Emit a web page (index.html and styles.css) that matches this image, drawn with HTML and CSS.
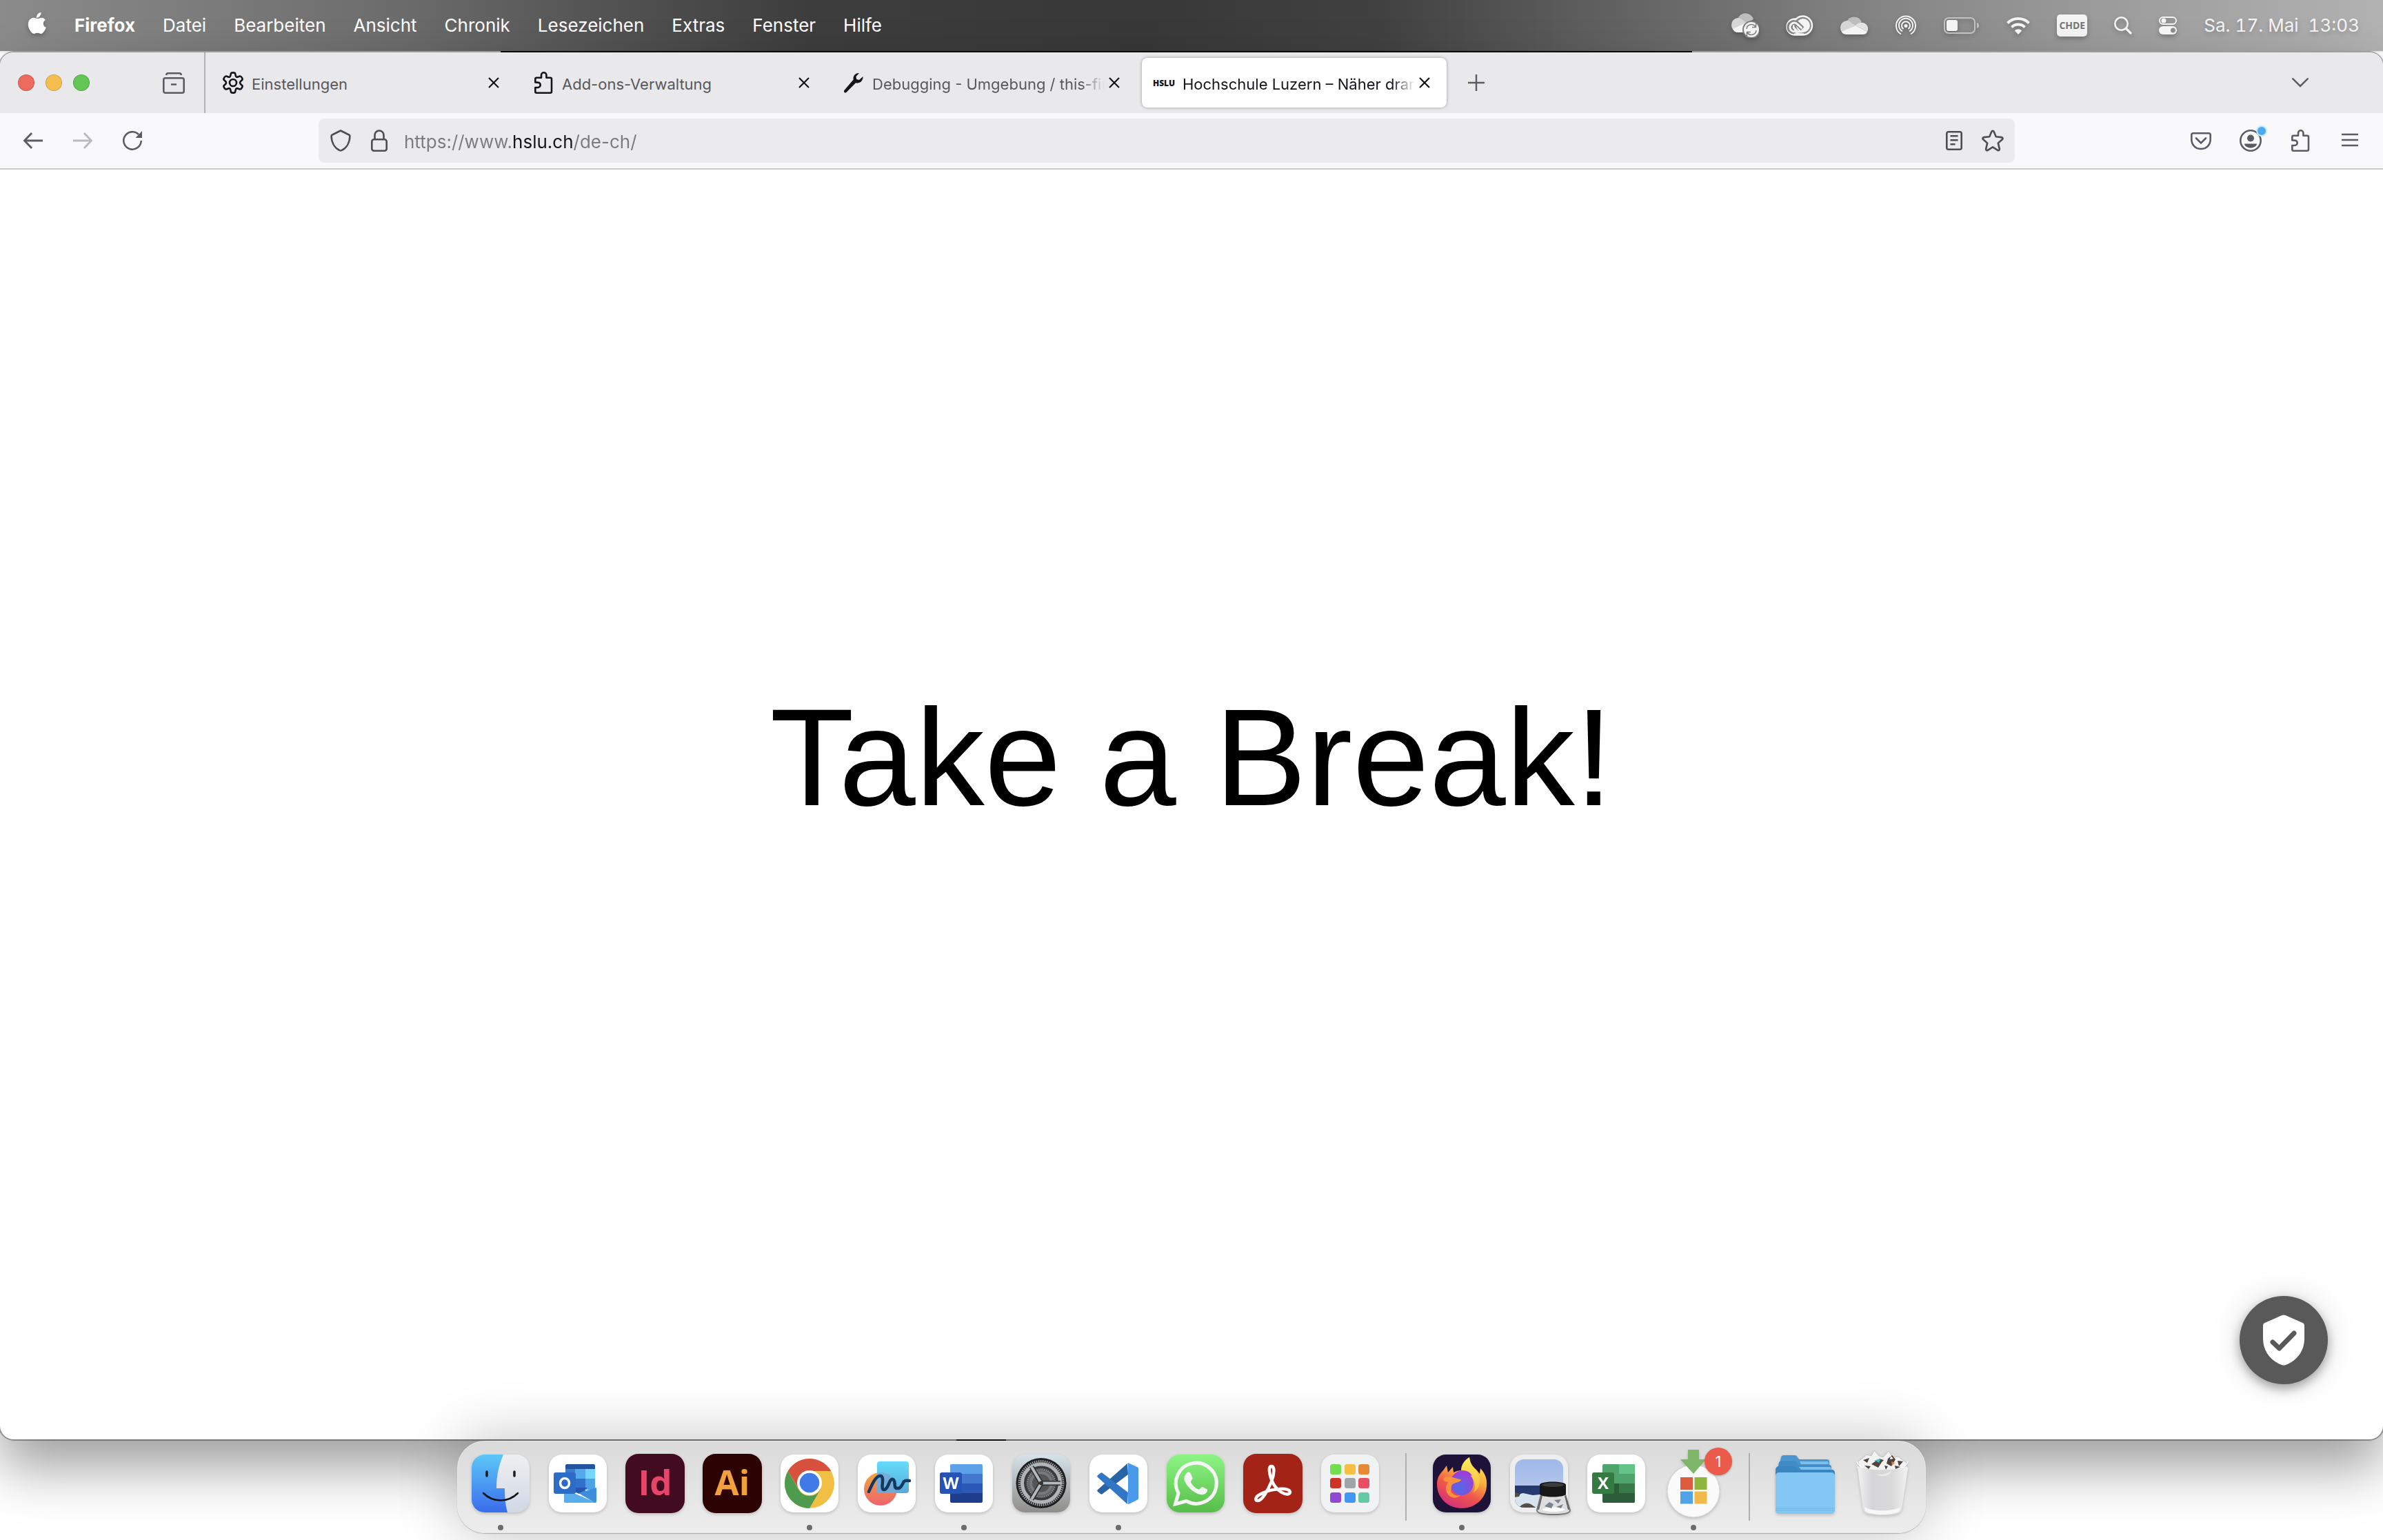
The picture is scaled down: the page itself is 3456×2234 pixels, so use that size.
FILE: index.html
```html
<!DOCTYPE html>
<html lang="de">
<head>
<meta charset="utf-8">
<meta name="viewport" content="width=device-width, initial-scale=1">
<title>Hochschule Luzern – Näher dran</title>
<link rel="stylesheet" href="styles.css">
</head>
<body>
<header class="menubar">
  <nav class="menus" aria-label="Menüleiste">
    <button class="apple" aria-label="Apple-Menü">
      <svg width="28" height="32" viewBox="0 0 28 32" fill="currentColor"><path d="M19.5 0c.3 2-.6 4-1.800 5.400-1.200 1.400-3 2.400-4.800 2.300-.3-2 .7-4 1.800-5.200C15.900 1.100 17.900.1 19.500 0zM25.900 11c-2 1.300-3.100 3-3.100 5.200 0 2.600 1.500 4.600 4.100 5.600-.6 1.800-1.500 3.600-2.600 5.200-1.600 2.300-2.900 4-5 4-1.900 0-2.700-1.200-5.100-1.200S10.900 31 9.100 31c-2 0-3.500-1.900-5.100-4.200-3.200-4.700-4.200-10.600-2-14.700 1.500-2.700 4.100-4.300 6.700-4.300 2.500 0 4 1.300 5.800 1.300S17.900 7.700 20.300 7.700c2.200 0 4.300 1.200 5.600 3.300z"/></svg>
    </button>
    <button class="menu app">Firefox</button>
    <button class="menu">Datei</button>
    <button class="menu">Bearbeiten</button>
    <button class="menu">Ansicht</button>
    <button class="menu">Chronik</button>
    <button class="menu">Lesezeichen</button>
    <button class="menu">Extras</button>
    <button class="menu">Fenster</button>
    <button class="menu">Hilfe</button>
  </nav>
  <div class="status">
    <button aria-label="OneDrive wird synchronisiert">
      <svg width="40" height="36" viewBox="0 0 40 36"><path d="M9 8.500A12 12 0 0 1 32 9l-11 6z" fill="#bdbdbd"/><path d="M9 7a10 10 0 0 0-9 10c0 3 1 5 2.500 7L22 14 14 8.500C12 7 10 7 9 7z" fill="#d6d6d6"/><path d="M2 23l19-9 4 14H10c-4 0-7-2-8-5z" fill="#f4f4f4"/><circle cx="29" cy="24" r="13" fill="#7d7d7d"/><circle cx="29" cy="24" r="11" fill="#f4f4f4"/><path d="M22 23a7 7 0 0 1 13-3M36 25a7 7 0 0 1-13 3M35.500 15v5.500H30M22.500 33v-5.500H28" fill="none" stroke="#7d7d7d" stroke-width="1.500"/></svg>
    </button>
    <button aria-label="Creative Cloud">
      <svg width="40" height="30" viewBox="0 0 40 30"><rect x="1.500" y="5.500" width="30" height="23" rx="11.500" fill="none" stroke="#f4f4f4" stroke-width="2.500"/><circle cx="24.500" cy="15" r="13.500" fill="#858585" stroke="#f4f4f4" stroke-width="2.500"/><path d="M12 27.500h14" stroke="#f4f4f4" stroke-width="2.500"/><circle cx="25" cy="15" r="10" fill="#f4f4f4"/><path d="M12 23.800c-4 0-7-2.600-7-6.400s3-6.700 7-6.700c3 0 4.500 1.500 6 3l6 6" fill="none" stroke="#858585" stroke-width="7"/><path d="M23 24h-9c-5 0-8-3-8-6.600s3-6.400 6.500-6.400c2 0 3 .8 4.500 2.300l5.500 5M11 18l6 5.500" fill="none" stroke="#f4f4f4" stroke-width="3" stroke-linecap="round"/></svg>
    </button>
    <button aria-label="OneDrive">
      <svg width="40" height="28" viewBox="0 0 40 28"><path d="M9 8.500A12 12 0 0 1 31 9l-9 6z" fill="#bdbdbd"/><path d="M9 7a10 10 0 0 0-9 10c0 3 1 5 2.500 7L22 14 14 8.500C12 7 10 7 9 7z" fill="#d6d6d6"/><path d="M22 14c3-4 8-5 11-4 4 1 7 4 7 8 0 2 0 3-1 5z" fill="#e2e2e2"/><path d="M2 23l20-9 17 9c-1 3-4 4-6 4H10c-4 0-7-1-8-4z" fill="#f4f4f4"/></svg>
    </button>
    <button aria-label="AirDrop">
      <svg width="32" height="30" viewBox="0 0 32 30" fill="none" stroke="#f4f4f4" stroke-width="2"><path d="M9 27.500a14 14 0 1 1 14 0M11 23.500a10 10 0 1 1 10 0M12.500 20a6 6 0 1 1 7 0"/><circle cx="16" cy="15.500" r="2.500" fill="#f4f4f4" stroke="none"/></svg>
    </button>
    <button aria-label="Batterie">
      <svg width="52" height="26" viewBox="0 0 52 26"><rect x="1" y="2" width="44" height="22" rx="6" fill="none" stroke="#c2c2c2" stroke-width="2"/><rect x="4" y="5" width="16" height="16" rx="3" fill="#f4f4f4"/><path d="M48 9c4 1 4 7 0 8z" fill="#c2c2c2"/></svg>
    </button>
    <button aria-label="WLAN">
      <svg width="34" height="26" viewBox="0 0 34 26" fill="none" stroke="#f4f4f4" stroke-width="4"><path d="M1.500 9.500a22 22 0 0 1 31 0M7.500 15.500a13.500 13.500 0 0 1 19 0"/><path d="M17 26l-5.300-5.500a7.500 7.500 0 0 1 10.600 0z" fill="#f4f4f4" stroke="none"/></svg>
    </button>
    <button class="layout">CHDE</button>
    <button aria-label="Suche">
      <svg width="26" height="26" viewBox="0 0 26 26" fill="none" stroke="#f4f4f4" stroke-linecap="round"><circle cx="10.500" cy="10.500" r="9.200" stroke-width="2.600"/><path d="M17.500 17.500l6.500 6.500" stroke-width="3.400"/></svg>
    </button>
    <button aria-label="Kontrollzentrum">
      <svg width="26" height="28" viewBox="0 0 26 28"><rect x="1" y="2" width="24" height="10" rx="5" fill="none" stroke="#f4f4f4" stroke-width="2"/><circle cx="7" cy="7" r="3.500" fill="#f4f4f4"/><rect y="15" width="26" height="12" rx="6" fill="#f4f4f4"/><circle cx="20.500" cy="21" r="3.500" fill="#8c8c8c"/></svg>
    </button>
    <button class="clock">Sa. 17. Mai&nbsp; 13:03</button>
  </div>
</header>

<section class="window" aria-label="Firefox">
  <div class="tabbar">
    <div class="lights">
      <button class="light red" aria-label="Schließen"></button>
      <button class="light yellow" aria-label="Minimieren"></button>
      <button class="light green" aria-label="Vollbild"></button>
    </div>
    <button class="recent" aria-label="Zuletzt verwendet">
      <svg width="32" height="32" viewBox="0 0 32 32" fill="none" stroke="currentColor" stroke-width="2.600"><rect x="1.300" y="9.300" width="29.400" height="21.400" rx="2.500"/><path d="M5.300 5c0-2 1-2.700 2.500-2.700h16.400c1.500 0 2.500.7 2.500 2.700M12 18.500h8"/></svg>
    </button>
    <div class="tabs">
      <div class="tab">
        <svg width="32" height="32" viewBox="0 0 32 32" fill="none" stroke="currentColor" stroke-width="2.600" stroke-linejoin="round"><path d="M13 2.500c.5-1.500 5.500-1.500 6 0l1 4c.2.800 1.500 1.500 2.300 1.300l3.500-1.200c1.800-.6 4.700 3.800 3.500 5.200L26.500 14.500c-.7.900-.7 2.100 0 3l2.800 2.700c1.200 1.400-1.700 5.800-3.500 5.200l-3.500-1.200c-.8-.2-2.100.5-2.300 1.300l-1 4c-.5 1.500-5.500 1.500-6 0l-1-4c-.2-.8-1.500-1.500-2.300-1.300l-3.500 1.200c-1.800.6-4.700-3.800-3.500-5.200l2.800-2.700c.7-.9.700-2.100 0-3L2.700 11.800C1.500 10.400 4.400 6 6.200 6.600l3.500 1.200c.8.200 2.100-.5 2.300-1.300z"/><circle cx="16" cy="16" r="5"/></svg>
        <button class="title">Einstellungen</button>
        <button class="close" aria-label="Tab schließen"><svg width="16" height="16" viewBox="0 0 16 16" stroke="currentColor" stroke-width="2.200"><path d="M1 1l14 14M15 1L1 15"/></svg></button>
      </div>
      <div class="tab">
        <svg width="32" height="32" viewBox="0 0 32 32" fill="none" stroke="currentColor" stroke-width="2.600" stroke-linejoin="round"><path d="M4.300 15.500V10.500c0-1 .7-1.700 1.700-1.700h7V5a3.700 3.700 0 0 1 7.400 0v3.800H26c1.200 0 2 .8 2 1.800v18.100c0 1.200-.8 2-2 2H6.300c-1.200 0-2-.8-2-2V23H8a3.700 3.700 0 0 0 0-7.400z"/></svg>
        <button class="title">Add-ons-Verwaltung</button>
        <button class="close" aria-label="Tab schließen"><svg width="16" height="16" viewBox="0 0 16 16" stroke="currentColor" stroke-width="2.200"><path d="M1 1l14 14M15 1L1 15"/></svg></button>
      </div>
      <div class="tab">
        <svg width="32" height="32" viewBox="0 0 32 32" fill="currentColor"><path d="M24 2c-5-.5-9.500 4-8.300 9.500L2.600 26.700c-1 1.200-.8 2.300 0 3.200 1 .9 2.300.8 3.300-.3L19 16.300c6 1.500 11-3.500 10.500-9.300L24 12l-3.800-1-.7-4z"/></svg>
        <button class="title long">Debugging - Umgebung / this-firefox</button>
        <button class="close" aria-label="Tab schließen"><svg width="16" height="16" viewBox="0 0 16 16" stroke="currentColor" stroke-width="2.200"><path d="M1 1l14 14M15 1L1 15"/></svg></button>
      </div>
      <div class="tab active">
        <span class="favicon">HSLU</span>
        <button class="title long">Hochschule Luzern – Näher dran</button>
        <button class="close" aria-label="Tab schließen"><svg width="16" height="16" viewBox="0 0 16 16" stroke="currentColor" stroke-width="2.200"><path d="M1 1l14 14M15 1L1 15"/></svg></button>
      </div>
    </div>
    <button class="newtab" aria-label="Neuer Tab"><svg width="24" height="24" viewBox="0 0 24 24" stroke="currentColor" stroke-width="2.400"><path d="M12 0v24M0 12h24"/></svg></button>
    <button class="alltabs" aria-label="Alle Tabs"><svg width="24" height="14" viewBox="0 0 24 14" fill="none" stroke="currentColor" stroke-width="2.500" stroke-linecap="round"><path d="M1.300 1.300L12 12 22.700 1.300"/></svg></button>
  </div>

  <div class="toolbar">
    <div class="history">
      <button aria-label="Zurück"><svg width="32" height="32" viewBox="0 0 32 32" fill="none" stroke="currentColor" stroke-width="2.800"><path d="M30 16H4M14 5L3.500 16 14 27"/></svg></button>
      <button class="off" aria-label="Vor"><svg width="32" height="32" viewBox="0 0 32 32" fill="none" stroke="currentColor" stroke-width="2.800"><path d="M2 16h26M18 5l10.500 11L18 27"/></svg></button>
      <button aria-label="Neu laden"><svg width="32" height="32" viewBox="0 0 32 32" fill="none" stroke="currentColor" stroke-width="2.600"><path d="M28.700 16A12.700 12.700 0 1 1 25 7"/><path d="M30 2v10H20.500z" fill="currentColor" stroke="none"/></svg></button>
    </div>
    <div class="urlbar">
      <button aria-label="Schutz vor Aktivitätenverfolgung"><svg width="32" height="32" viewBox="0 0 32 32" fill="none" stroke="currentColor" stroke-width="2.600" stroke-linejoin="round"><path d="M16 1.500l12 6c1 .5 1.400 1 1.400 2-.2 9-4.400 17-12 20.600-1 .5-1.800.5-2.800 0C7 26.500 2.800 18.500 2.600 9.500c0-1 .4-1.500 1.400-2z"/></svg></button>
      <button aria-label="Sichere Verbindung"><svg width="32" height="32" viewBox="0 0 32 32" fill="none" stroke="currentColor" stroke-width="2.600"><rect x="5.300" y="14.300" width="21.400" height="16.400" rx="3"/><path d="M9.500 14V8a6.500 6.500 0 0 1 13 0v6"/></svg></button>
      <input class="address" type="text" value="https://www.hslu.ch/de-ch/" aria-label="Adresse" spellcheck="false">
      <button aria-label="Leseansicht"><svg width="32" height="32" viewBox="0 0 32 32" fill="none" stroke="currentColor" stroke-width="2.600"><rect x="5.300" y="3.300" width="21.400" height="25.400" rx="2.500"/><path d="M10.500 9.300h11M10.500 15.300h11M10.500 21.300h7"/></svg></button>
      <button aria-label="Lesezeichen hinzufügen"><svg width="32" height="32" viewBox="0 0 32 32" fill="none" stroke="currentColor" stroke-width="2.600" stroke-linejoin="round"><path d="M14.300 3c.7-1.500 2.700-1.500 3.400 0l3 7.300 8.100.8c1.700.2 2.300 2 1 3.200l-6 5.300 2 8.300c.4 1.700-1.200 2.800-2.700 1.900L16 25.300l-7.100 4.500c-1.500.9-3.100-.2-2.700-1.900l2-8.300-6-5.300c-1.300-1.200-.7-3 1-3.200l8.100-.8z"/></svg></button>
    </div>
    <div class="tools">
      <button aria-label="Pocket"><svg width="32" height="32" viewBox="0 0 32 32" fill="none" stroke="currentColor" stroke-width="2.600" stroke-linecap="round"><path d="M5 5.300h22c1.700 0 2.700 1 2.700 2.500v6.500C29.700 22 24 28 16 28S2.300 22 2.300 14.300V7.800c0-1.500 1-2.500 2.700-2.500zM9 12.500l7 7 7-7"/></svg></button>
      <button class="account" aria-label="Konto"><svg width="32" height="32" viewBox="0 0 32 32"><circle cx="16" cy="16" r="14.700" fill="none" stroke="currentColor" stroke-width="2.600"/><circle cx="16" cy="12.500" r="5" fill="currentColor"/><path d="M7 20.500h18c0 3.500-4.500 6-9 6s-9-2.500-9-6z" fill="currentColor"/></svg></button>
      <button aria-label="Erweiterungen"><svg width="32" height="32" viewBox="0 0 32 32" fill="none" stroke="currentColor" stroke-width="2.600" stroke-linejoin="round"><path d="M4.300 15.500V10.500c0-1 .7-1.700 1.700-1.700h7V5a3.700 3.700 0 0 1 7.400 0v3.800H26c1.200 0 2 .8 2 1.800v18.100c0 1.200-.8 2-2 2H6.300c-1.200 0-2-.8-2-2V23H8a3.700 3.700 0 0 0 0-7.400z"/></svg></button>
      <button aria-label="Anwendungsmenü"><svg width="32" height="32" viewBox="0 0 32 32" stroke="currentColor" stroke-width="2.400" stroke-linecap="round"><path d="M5 7h22M5 15h22M5 23h22"/></svg></button>
    </div>
  </div>

  <main class="page">
    <h1>Take a Break!</h1>
    <button class="privacy" aria-label="Datenschutz-Einstellungen">
      <svg width="62" height="74" viewBox="0 0 62 74"><path d="M28.500 1c1.500-.7 3.500-.7 5 0l25 11c1.700.8 2.500 2 2.500 4v19c0 17-10 31.500-27 38-2 .8-4 .8-6 0C11 66.500 1 52 1 35V16c0-2 .8-3.200 2.500-4z" fill="#fff"/><path d="M15 40l9.500 9L46 27" fill="none" stroke="#595959" stroke-width="7" stroke-linecap="round" stroke-linejoin="round"/></svg>
    </button>
  </main>
</section>

<footer class="shelf">
  <nav class="dock" aria-label="Dock">
    <button class="app-icon running" aria-label="Finder">
      <svg width="84" height="84" viewBox="0 0 84 84"><defs><linearGradient id="fb" x1="0" y1="0" x2="0" y2="1"><stop offset="0" stop-color="#5cc8f8"/><stop offset="1" stop-color="#3a6cec"/></linearGradient><linearGradient id="fg" x1="0" y1="0" x2="0" y2="1"><stop offset="0" stop-color="#efeff1"/><stop offset="1" stop-color="#d0d8e6"/></linearGradient><clipPath id="tile"><rect width="84" height="84" rx="19"/></clipPath></defs><g clip-path="url(#tile)"><path d="M0 0h84v84H0z" fill="url(#fg)"/><path d="M0 0h46c-7 17-10 31-10 49h12c0 14 1 24 4 35H0z" fill="url(#fb)"/></g><path d="M22 25v6M62 25v6" stroke="#1c1c1e" stroke-width="3.500" stroke-linecap="round"/><path d="M17 56c14 14 36 14 50 0" fill="none" stroke="#111" stroke-width="2.500" stroke-linecap="round"/></svg>
    </button>
    <button class="app-icon" aria-label="Outlook">
      <svg width="84" height="84" viewBox="0 0 84 84"><rect width="84" height="84" rx="19" fill="#fff"/><path d="M26 14h39a2 2 0 0 1 2 2v6H24v-6a2 2 0 0 1 2-2z" fill="#2354a0"/><path d="M24 21h14v14H24z" fill="#3b7dcb"/><path d="M38 21h15v14H38z" fill="#55a8ea"/><path d="M53 21h14v14H53z" fill="#74d6fd"/><path d="M24 35h29v20H24z" fill="#3171cb"/><path d="M53 35h14v16H53z" fill="#4ca2e4"/><path d="M22 48h34L44 57z" fill="#2458b0"/><path d="M22 50l47 20H24a2 2 0 0 1-2-2z" fill="#57aeea"/><path d="M69 48v20a2 2 0 0 1-2 2L43 56z" fill="#3f8edb"/><rect x="7" y="26" width="32" height="31" rx="3" fill="#2c6cc6"/><ellipse cx="23" cy="41.500" rx="6.500" ry="7" fill="none" stroke="#fff" stroke-width="3.500"/></svg>
    </button>
    <button class="app-icon" aria-label="InDesign">
      <svg width="86" height="86" viewBox="0 0 86 86"><rect width="86" height="86" rx="19" fill="#430b20"/><text x="43" y="60" text-anchor="middle" class="mark" fill="#e9446a">Id</text></svg>
    </button>
    <button class="app-icon" aria-label="Illustrator">
      <svg width="86" height="86" viewBox="0 0 86 86"><rect width="86" height="86" rx="19" fill="#2c0301"/><text x="43" y="60" text-anchor="middle" class="mark" fill="#f0a03c">Ai</text></svg>
    </button>
    <button class="app-icon running" aria-label="Chrome">
      <svg width="84" height="84" viewBox="0 0 84 84"><rect width="84" height="84" rx="19" fill="#fff"/><circle cx="42" cy="42" r="36" fill="#f2bf45"/><path d="M42 24h31.200A36 36 0 0 0 10.800 24L27 51z" fill="#d8513f"/><path d="M42 78l15.600-27A18 18 0 0 1 26.400 51L10.800 24A36 36 0 0 0 42 78z" fill="#4e9b50"/><circle cx="42" cy="41" r="18" fill="#fff"/><circle cx="42" cy="41" r="14.300" fill="#3f7ae6"/></svg>
    </button>
    <button class="app-icon" aria-label="Freeform">
      <svg width="84" height="84" viewBox="0 0 84 84"><defs><linearGradient id="ff1" x1="0" y1="0" x2="0" y2="1"><stop offset="0" stop-color="#f2a43c"/><stop offset="1" stop-color="#ed6470"/></linearGradient><linearGradient id="ff2" x1="0" y1="0" x2="0" y2="1"><stop offset="0" stop-color="#66dcfa"/><stop offset="1" stop-color="#58a9dc"/></linearGradient></defs><rect width="84" height="84" rx="19" fill="#fff"/><circle cx="33" cy="50" r="24" fill="url(#ff1)"/><rect x="28" y="10" width="46" height="46" rx="4" fill="url(#ff2)"/><path d="M28 26.500A24 24 0 0 1 56 56H28z" fill="#7ba6d6" opacity=".8"/><path d="M16 54c5-12 11-24 17-23 7 1-1 20 5 20 7 0 7-17 13-15 5 2 0 13 6 13 6 1 8-7 10-10 2-2 6-1 8-1" fill="none" stroke="#14395e" stroke-width="4.500" stroke-linecap="round"/></svg>
    </button>
    <button class="app-icon running" aria-label="Word">
      <svg width="84" height="84" viewBox="0 0 84 84"><rect width="84" height="84" rx="19" fill="#fff"/><path d="M22 28V16a2 2 0 0 1 2-2h43a2 2 0 0 1 2 2v12z" fill="#5ba2e8"/><path d="M22 28h47v14H22z" fill="#4279cf"/><path d="M22 42h47v14H22z" fill="#2c58b8"/><path d="M22 56h47v12a2 2 0 0 1-2 2H24a2 2 0 0 1-2-2z" fill="#1f3d8a"/><rect x="7" y="26" width="32" height="31" rx="3" fill="#2553b6"/><text x="23" y="50" text-anchor="middle" class="letter" fill="#fff">W</text></svg>
    </button>
    <button class="app-icon" aria-label="Systemeinstellungen">
      <svg width="84" height="84" viewBox="0 0 84 84"><defs><linearGradient id="st" x1="0" y1="0" x2="0" y2="1"><stop offset="0" stop-color="#d6e2ea"/><stop offset="1" stop-color="#8e8d8a"/></linearGradient></defs><rect width="84" height="84" rx="19" fill="url(#st)"/><circle cx="42" cy="41.500" r="36.500" fill="#1e1f21"/><circle cx="42" cy="41.500" r="31.500" fill="none" stroke="#9ba0a4" stroke-width="4" stroke-dasharray="1.600 1.400"/><circle cx="42" cy="41.500" r="27.500" fill="#38393b" stroke="#aeb4b8" stroke-width="5"/><circle cx="42" cy="41.500" r="20" fill="#5f5f5f" stroke="#85888a" stroke-width="3" stroke-dasharray="1.500 1.300"/><circle cx="42" cy="41.500" r="15" fill="#555" stroke="#77797b" stroke-width="4"/><path d="M42 41.500h28M42 41.500L28 18M42 41.500L28 65" stroke="#2a2b2c" stroke-width="7"/><path d="M42 41.500h28M42 41.500L28 18M42 41.500L28 65" stroke="#b3b9bd" stroke-width="4"/><circle cx="42" cy="41.500" r="3" fill="#333"/></svg>
    </button>
    <button class="app-icon running" aria-label="Visual Studio Code">
      <svg width="84" height="84" viewBox="0 0 84 84"><rect width="84" height="84" rx="19" fill="#fff"/><path d="M55 13L12 51c-1 1-1 2 0 3l4 3c1 1 2 1 3 0l37-28z" fill="#2863a6"/><path d="M55 72L12 33c-1-1-1-2 0-3l4-3c1-1 2-1 3 0l37 28z" fill="#3277c6"/><path d="M55 13c1-1 2-1 3 0l11 5c1.500.7 2 1.500 2 3v42c0 1.500-.5 2.300-2 3l-11 5.500c-1 .5-2 .5-3 0 .7.500 1-.5 1-1.500V15c0-1-.3-2-1-2z" fill="#4a9aec"/></svg>
    </button>
    <button class="app-icon" aria-label="WhatsApp">
      <svg width="84" height="84" viewBox="0 0 84 84"><defs><linearGradient id="wa" x1="0" y1="0" x2="0" y2="1"><stop offset="0" stop-color="#8cf583"/><stop offset="1" stop-color="#57bd4a"/></linearGradient></defs><rect width="84" height="84" rx="19" fill="url(#wa)"/><path d="M12.500 72l4.500-16A29.500 29.500 0 1 1 28.500 67.500z" fill="none" stroke="#f4f5f4" stroke-width="5"/><path d="M29 27c2-2 5-2 6 1l2.500 6c.5 2-3 4-2.500 6 2 5 7 9 11 10.500 2 .7 4-4 6-3.500l6 3c2 1 1 4-1 6-3 3-8 3-14 0-8-4-15-12-17-18-1.500-5 .5-8.500 3-11z" fill="#f4f5f4"/></svg>
    </button>
    <button class="app-icon" aria-label="Acrobat">
      <svg width="86" height="86" viewBox="0 0 86 86"><rect width="86" height="86" rx="19" fill="#a32316"/><path d="M41 18c5 0 4 12 0 22-5 13-14 28-20 28-5 0-3-6 3-9 10-6 26-9 36-8 8 1 10 5 6 7-6 2-15-4-20-11-6-8-12-29-5-29z" fill="none" stroke="#fff" stroke-width="4.500"/></svg>
    </button>
    <button class="app-icon" aria-label="Launchpad">
      <svg width="84" height="84" viewBox="0 0 84 84"><rect width="84" height="84" rx="19" fill="#f1f2f3"/><rect x="13" y="14" width="16" height="15" rx="3.500" fill="#74dd50"/><rect x="34" y="14" width="16" height="15" rx="3.500" fill="#f4bf42"/><rect x="54" y="14" width="16" height="15" rx="3.500" fill="#e58b35"/><rect x="13" y="34" width="16" height="15" rx="3.500" fill="#cb3327"/><rect x="34" y="34" width="16" height="15" rx="3.500" fill="#a0a5a9"/><rect x="54" y="34" width="16" height="15" rx="3.500" fill="#ea4e63"/><rect x="13" y="55" width="16" height="15" rx="3.500" fill="#9149cf"/><rect x="34" y="55" width="16" height="15" rx="3.500" fill="#4297f2"/><rect x="54" y="55" width="16" height="15" rx="3.500" fill="#65c9a2"/></svg>
    </button>
    <span class="rule"></span>
    <button class="app-icon running" aria-label="Firefox">
      <svg width="84" height="84" viewBox="0 0 84 84"><defs><linearGradient id="fx" x1=".8" y1="0" x2=".3" y2="1"><stop offset="0" stop-color="#fbe65a"/><stop offset=".35" stop-color="#f9b13d"/><stop offset=".65" stop-color="#f0584a"/><stop offset="1" stop-color="#d4307a"/></linearGradient><radialGradient id="fp" cx=".4" cy=".7" r=".8"><stop offset="0" stop-color="#4f6be8"/><stop offset="1" stop-color="#a63bd6"/></radialGradient><linearGradient id="fy" x1="0" y1="0" x2="0" y2="1"><stop offset="0" stop-color="#fcec5c"/><stop offset="1" stop-color="#f8b93e"/></linearGradient></defs><rect width="84" height="84" rx="19" fill="#1f1238"/><path d="M42 78C22 78 6 63 6 43c0-9 4-15 9-20l5-7 2 10 7-8 1 8c4-2 8-3 12-3 0-9 5-15 11-19 1 10 5 13 10 18 2 2 3 4 5 6l1-8c8 9 10 17 9 26-1 18-17 32-36 32z" fill="url(#fx)"/><path d="M41 23c0-8 5-15 12-19 1 10 6 14 11 21 7 10 5 24-5 30 4-10 2-20-5-25-4-4-8-6-13-7z" fill="url(#fy)"/><circle cx="42" cy="42" r="17" fill="url(#fp)"/><path d="M26 36c4-8 10-13 17-13 8 0 12 4 14 8-4-1-7-1-9 1-5-3-11-3-15 0z" fill="#9c3ed8"/><path d="M15 36c2-5 9-4 13-3 6 1 9 3 13 3-1 5-8 4-12 7-3 2-2 6-3 10 3 6 9 8 14 6-8 8-20 2-21-9 0-5 2-9 4-10-3 0-6-1-8-4z" fill="#f7923d"/></svg>
    </button>
    <button class="app-icon" aria-label="Vorschau">
      <svg width="92" height="92" viewBox="0 0 92 92"><defs><linearGradient id="sky" x1="0" y1="0" x2="0" y2="1"><stop offset="0" stop-color="#9db8ea"/><stop offset="1" stop-color="#b4c5ea"/></linearGradient><clipPath id="pic"><rect x="11" y="11" width="70" height="70" rx="13"/></clipPath></defs><rect x="4" y="4" width="84" height="84" rx="19" fill="#eee"/><g clip-path="url(#pic)"><path d="M11 11h72v39H11z" fill="url(#sky)"/><path d="M11 49h72v34H11z" fill="#263a72"/><path d="M11 63l12-3 14 3 20-2 26 4v18H11z" fill="#d5e4ee"/><path d="M11 59l8 2-2 4-6 1zM17 82c3-6 10-9 17-6l9 6z" fill="#544e49"/></g><path d="M49 62h35l7 23c0 4-7 6-24 6s-24-2-24-6z" fill="#dcdee0" stroke="#777" stroke-width="2"/><path d="M50 84c8-5 26-5 34 0-8 4-26 4-34 0z" fill="#fff"/><path d="M54 79l7-6 6 3-3 6zM68 70l10-1-4 6zM71 80l10-4-3 6z" fill="#7c838d"/><path d="M50 64l-5 20M84 64l5 20" stroke="#666" stroke-width="2"/><path d="M47 48c0-6 38-6 38 0v13c0 6-38 6-38 0z" fill="#171717"/><ellipse cx="66" cy="48" rx="16" ry="3" fill="#3d3d3d"/></svg>
    </button>
    <button class="app-icon" aria-label="Excel">
      <svg width="84" height="84" viewBox="0 0 84 84"><rect width="84" height="84" rx="19" fill="#fff"/><rect x="22" y="14" width="47" height="56" rx="2" fill="#4fa36d"/><path d="M46 14h21a2 2 0 0 1 2 2v12H46z" fill="#64c389"/><path d="M46 28h23v14H46z" fill="#4fa36d"/><path d="M22 42h24v14H22z" fill="#2c5c39"/><path d="M46 42h23v14H46z" fill="#3a7a49"/><path d="M22 56h47v12a2 2 0 0 1-2 2H24a2 2 0 0 1-2-2z" fill="#2c5c39"/><rect x="7" y="26" width="32" height="31" rx="3" fill="#357a42"/><text x="23" y="50" text-anchor="middle" class="letter" fill="#fff">X</text></svg>
    </button>
    <button class="app-icon running" aria-label="Microsoft AutoUpdate">
      <svg width="76" height="100" viewBox="0 0 76 100"><circle cx="38" cy="61" r="38" fill="#fafafa" stroke="#d2d2d2"/><path d="M19 41h18v18H19z" fill="#dd5b3d"/><path d="M39.500 41h18v18h-18z" fill="#8fb53f"/><path d="M19 61.500h18v18H19z" fill="#50a3e6"/><path d="M39.500 61.500h18v18h-18z" fill="#f1b94c"/><path d="M30 1h16v14h10L38 36 19 15h11z" fill="#7fb76a"/></svg>
      <span class="badge">1</span>
    </button>
    <span class="rule"></span>
    <button class="app-icon" aria-label="Downloads">
      <svg width="88" height="88" viewBox="0 0 88 88"><path d="M6 20l3-14c.5-2 2-3 4-3h15c3 0 4 1 5 3l2 3h40c3 0 4 1 4 3v20H6z" fill="#4a97cf"/><path d="M36 12h41l1 4H38z" fill="#7cbfec"/><path d="M3 27l3-13c.5-2 2-3 4-3h17c3 0 4 1 5 3l2 3h44c3 0 4 1 4 4v13H3z" fill="#3f8cc6"/><path d="M35 20h46l1 4H38z" fill="#7cbfec"/><path d="M1 38V25c0-4 2-6 5-6h20c3 0 4 1 6 3l2 2h48c4 0 5 2 5 5v10z" fill="#3a86c0"/><rect x="1" y="28" width="86" height="60" rx="5" fill="#83c7f4"/><path d="M1 80h86M1 83h86" stroke="#6fb4e4"/></svg>
    </button>
    <button class="app-icon" aria-label="Papierkorb">
      <svg width="76" height="96" viewBox="0 0 76 96"><defs><linearGradient id="bin" x1="0" y1="0" x2="1" y2="0"><stop offset="0" stop-color="#f3f3f4"/><stop offset=".3" stop-color="#d6d6d8"/><stop offset=".7" stop-color="#d9d9da"/><stop offset="1" stop-color="#f3f3f4"/></linearGradient></defs><path d="M3 16l8-6 4-4 7 2 4-8 7 8 6 2 8-9 6 9 8-1 5 4 7 5-4 12-31 5-32-5z" fill="#f2f2f2" stroke="#c4c4c4"/><path d="M1 26l2-3c12 7 58 7 70 0l2 3-9 59c-1 7-10 9-28 9s-27-2-28-9L1 17z" fill="url(#bin)"/><path d="M10 14l9-3-3 7zM22 20l8-6 7 3-5 8zM33 12l7 2-6 6zM46 12l6-5 5 6-6 10-7-4zM60 15l8 1-6 7zM12 22l9 1-3 4zM56 22l8 2-7 3zM41 22l5 1-3 5z" fill="#51423a"/><path d="M26 14l10-2-3 6z" fill="#45b6c8"/><path d="M51 16l5 2-4 4z" fill="#d88440"/><path d="M28 10l4 3-6 1zM50 8l4 4-5 1z" fill="#fff"/><path d="M1 16c2 5 4 7 8 9M75 16c-2 5-4 7-8 9" fill="none" stroke="#fafafa" stroke-width="1.500"/><path d="M28 34c8 3 18 0 23-5 0 6-12 12-23 5z" fill="#ededee"/><path d="M12 82c10 7 42 7 52 0l-1 5c-4 8-46 8-50 0z" fill="#f7f7f8"/></svg>
    </button>
  </nav>
</footer>
</body>
</html>
```
FILE: styles.css
```css
* {
  box-sizing: border-box;
}

html,
body {
  margin: 0;
  height: 100%;
}

body {
  display: flex;
  flex-direction: column;
  overflow: hidden;
  background: #fff linear-gradient(90deg, #eee 21%, #111 21% 71%, #eee 71%) 0 74px / 100% 2px no-repeat;
  font-family: Inter, "Liberation Sans", sans-serif;
}

button {
  display: flex;
  align-items: center;
  justify-content: center;
  margin: 0;
  padding: 0;
  border: 0;
  background: none;
  color: inherit;
  font: inherit;
  white-space: nowrap;
}

svg {
  display: block;
  flex: none;
}

/* macOS menu bar */
.menubar {
  display: flex;
  flex: none;
  align-items: center;
  justify-content: space-between;
  height: 74px;
  padding: 0 34px 0 40px;
  background: linear-gradient(90deg, #8b8b8b 0%, #777 11%, #6b6b6b 17%, #545454 25%, #3d3d3d 34%, #383838 48%, #414141 58%, #5c5c5c 66%, #828282 78%, #999 87%, #b2b2b2 100%);
  color: #fff;
  font-size: 26px;
  font-weight: 400;
  line-height: 32px;
}

.menus {
  display: flex;
  align-items: center;
  gap: 40px;
  text-shadow: 0 3px 6px rgba(0, 0, 0, .3);
}

.menus svg,
.status svg {
  filter: drop-shadow(0 3px 3px rgba(0, 0, 0, .25));
}

.apple {
  height: 38px;
  align-items: flex-start;
}

.app {
  font-weight: 700;
}

.status {
  display: flex;
  align-items: center;
  gap: 39px;
  color: #f4f4f4;
}

.layout {
  width: 44px;
  height: 32px;
  border-radius: 5px;
  background: #f4f4f4;
  box-shadow: 0 3px 6px rgba(0, 0, 0, .25);
  color: #767676;
  font-family: "Open Sans", sans-serif;
  font-size: 14px;
  font-weight: 700;
}

.clock {
  font-variant-numeric: tabular-nums;
  text-shadow: 0 3px 6px rgba(0, 0, 0, .2);
}

/* Browser window */
.window {
  display: flex;
  flex: 1;
  flex-direction: column;
  margin-top: 2px;
  border-radius: 20px;
  background: #fff;
  box-shadow: 0 0 0 2px rgba(0, 0, 0, .3), 0 40px 80px rgba(0, 0, 0, .39);
  color: #5b5b66;
}

.tabbar {
  display: flex;
  flex: none;
  align-items: center;
  height: 88px;
  padding: 0 108px 0 26px;
  border-radius: 20px 20px 0 0;
  background: #e9e9eb;
}

.lights {
  display: flex;
  gap: 16px;
}

.light {
  width: 24px;
  height: 24px;
  border: 1px solid rgba(0, 0, 0, .15);
  border-radius: 50%;
}

.red {
  background: #ed6a5e;
}

.yellow {
  background: #f5bf4f;
}

.green {
  background: #62c655;
}

.recent {
  width: 168px;
  height: 88px;
  padding-right: 28px;
  justify-content: flex-end;
  border-right: 2px solid #b3b3b6;
}

.tabs {
  display: flex;
  gap: 8px;
  padding: 0 8px;
}

.tab {
  display: flex;
  align-items: center;
  width: 442px;
  height: 72px;
  padding: 0 24px 0 16px;
  border-radius: 8px;
  color: #15141a;
  font-size: 22px;
}

.title {
  flex: 1;
  justify-content: flex-start;
  min-width: 0;
  margin-left: 11px;
  padding-top: 4px;
  overflow: hidden;
  color: #58585c;
  line-height: 32px;
}

.long {
  mask-image: linear-gradient(90deg, #000 90%, transparent);
}

.active {
  background: #fff;
  box-shadow: 0 0 4px rgba(0, 0, 0, .35);
}

.active .title {
  color: #15141a;
}

.favicon {
  width: 32px;
  font-family: "Open Sans", sans-serif;
  font-size: 12px;
  font-weight: 800;
}

.close {
  width: 16px;
  margin-left: 6px;
}

.newtab {
  width: 70px;
  height: 72px;
}

.alltabs {
  margin-left: auto;
}

.toolbar {
  display: flex;
  flex: none;
  align-items: center;
  height: 82px;
  padding: 0 32px;
  border-bottom: 2px solid #cccccf;
  background: #f9f9fb;
}

.history,
.tools {
  display: flex;
  gap: 40px;
}

.off {
  opacity: .4;
}

.urlbar {
  display: flex;
  flex: 1;
  align-items: center;
  gap: 24px;
  height: 64px;
  margin: 0 254px;
  padding: 0 16px;
  border-radius: 8px;
  background: #ebebed;
  color: #4d4d52;
}

.address {
  flex: 1;
  min-width: 0;
  height: 50px;
  margin-left: -4px;
  padding: 2px 0 0;
  border: 0;
  outline: 0;
  background: linear-gradient(90deg, #7b7b7f 157px, #15141a 157px 246px, #7b7b7f 246px);
  background-clip: text;
  -webkit-text-fill-color: transparent;
  color: #7b7b7f;
  font: 400 26px/48px Inter, "Liberation Sans", sans-serif;
}

.account {
  position: relative;
}

.account::after {
  position: absolute;
  top: -6px;
  right: -8px;
  width: 12px;
  height: 12px;
  border: 2px solid #c4e8fb;
  border-radius: 50%;
  box-sizing: content-box;
  background: #4caaee;
  content: "";
}

.page {
  position: relative;
  display: flex;
  flex: 1;
  align-items: center;
  justify-content: center;
  padding-bottom: 136px;
}

h1 {
  margin: 0;
  color: #000;
  font: 400 200px/200px "Liberation Sans", Arial, sans-serif;
}

.privacy {
  position: absolute;
  right: 80px;
  bottom: 80px;
  width: 128px;
  height: 128px;
  border-radius: 50%;
  background: #595959;
  box-shadow: 0 6px 16px rgba(0, 0, 0, .35), 0 0 50px rgba(0, 0, 0, .12);
}

/* Dock */
.shelf {
  position: relative;
  display: flex;
  flex: none;
  justify-content: center;
  padding: 2px 0 10px;
  background: linear-gradient(#111, #111) 41% 0 / 72px 2px no-repeat;
}

.dock {
  display: flex;
  align-items: center;
  height: 134px;
  padding: 0 6px;
  border: 1px solid #e8e8e8;
  border-radius: 40px;
  background: linear-gradient(#dadada, #ededed);
  box-shadow: 0 1px 1px rgba(0, 0, 0, .25), 0 0 84px rgba(0, 0, 0, .25);
}

.app-icon {
  position: relative;
  width: 112px;
  height: 134px;
  padding-bottom: 10px;
}

.app-icon svg {
  filter: drop-shadow(0 2px 2px rgba(0, 0, 0, .18));
}

.running::after {
  position: absolute;
  bottom: 4px;
  left: 52px;
  width: 8px;
  height: 8px;
  border-radius: 50%;
  background: #6c6c6c;
  content: "";
}

.rule {
  width: 2px;
  height: 98px;
  margin: 0 24px;
  background: #b0b0b0;
}

.badge {
  position: absolute;
  top: 10px;
  right: 0;
  width: 40px;
  height: 40px;
  border-radius: 50%;
  background: #eb5a4b;
  color: #fff;
  font-size: 22px;
  line-height: 40px;
  box-shadow: 0 1px 3px rgba(0, 0, 0, .3);
}

.mark {
  font: 700 51px "Open Sans", sans-serif;
}

.letter {
  font: 700 24px "Open Sans", sans-serif;
}
```
